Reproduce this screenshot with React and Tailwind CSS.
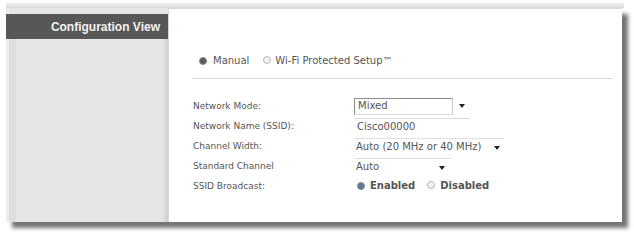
import React from 'react';

const Radio = ({ checked, tone = 'gray' }) => {
  const fill = tone === 'blue' ? 'bg-[#5f7a94]' : 'bg-[#5a5a5a]';
  return (
    <span
      className={`inline-block h-[8px] w-[8px] shrink-0 rounded-full border ${
        checked ? `${fill} border-[#8a8a8a]` : 'bg-[#f4f4f4] border-[#b5b5b5]'
      }`}
    />
  );
};

const Arrow = () => (
  <span className="inline-block h-0 w-0 border-x-[3px] border-t-[4px] border-x-transparent border-t-[#222]" />
);

const Row = ({ label, children }) => (
  <div className="flex h-[20px] items-center">
    <div className="w-[161px] shrink-0 text-[9px] text-[#555]">{label}</div>
    <div className="flex items-center text-[10px]">{children}</div>
  </div>
);

export default function App() {
  return (
    <div
      className="h-[232px] w-[634px] overflow-hidden bg-white pl-[6px] pt-[3px] text-[10px] leading-none"
      style={{ fontFamily: '"DejaVu Sans", Verdana, sans-serif' }}
    >
      <div className="h-[5px] w-[618px] bg-gradient-to-b from-[#f0f0f0] to-[#dcdcdc]" />
      <div className="flex h-[214px] w-[616px] shadow-[6px_6px_4px_rgba(0,0,0,0.55)]">
        {/* left panel */}
        <div className="flex w-[162px] shrink-0 flex-col bg-[#e6e6e6] border-l-[3px] border-[#ececec] pt-[6px]">
          <div
            className="flex h-[25px] -ml-[3px] items-center justify-end bg-[#575757] pr-[8px] text-[12px] font-bold text-[#f2f2f2]"
            style={{ fontFamily: '"Liberation Sans", Arial, sans-serif' }}
          >
            Configuration View
          </div>
          <div className="flex flex-1">
            <div className="w-[7px] bg-[#dedede]" />
            <div className="flex-1" />
            <div className="w-[5px] bg-gradient-to-r from-[#e2e2e2] to-[#cfcfcf]" />
          </div>
        </div>

        {/* content */}
        <div className="flex-1 border-t border-l border-[#d8d8d8] bg-white pl-[24px] pr-[9px] pt-[47px]">
          <div className="flex items-center pl-[6px] text-[#555]">
            <Radio checked />
            <span className="ml-[6px]">Manual</span>
            <span className="ml-[14px]"><Radio /></span>
            <span className="ml-[4px]">Wi-Fi Protected Setup™</span>
          </div>
          <div className="mt-[12px] h-px bg-[#d9d9d9]" />

          <div className="mt-[17px]">
            <Row label="Network Mode:">
              <div className="flex h-[17px] w-[116px] items-center">
                <span className="flex h-full flex-1 items-center border border-t-[#8c8c8c] border-l-[#8c8c8c] border-b-[#dcdcdc] border-r-[#c8c8c8] pl-[3px] text-[#555]">
                  Mixed
                </span>
                <span className="flex h-full w-[17px] items-center justify-center">
                  <Arrow />
                </span>
              </div>
            </Row>
            <Row label="Network Name (SSID):">
              <div className="flex h-[17px] w-[116px] items-center border-t border-[#d8d8d8] pl-[3px] text-[#555]">
                Cisco00000
              </div>
            </Row>
            <Row label="Channel Width:">
              <div className="flex h-[17px] w-[150px] items-center border-t border-[#e0e0e0] pl-[2px] text-[#555]">
                <span className="flex-1">Auto (20 MHz or 40 MHz)</span>
                <span className="pr-[4px]"><Arrow /></span>
              </div>
            </Row>
            <Row label="Standard Channel">
              <div className="flex h-[17px] w-[98px] items-center border-t border-[#e0e0e0] pl-[2px] text-[#555]">
                <span className="flex-1">Auto</span>
                <span className="pr-[7px]"><Arrow /></span>
              </div>
            </Row>
            <Row label="SSID Broadcast:">
              <div className="flex items-center pl-[3px] font-bold text-[#555]">
                <Radio checked tone="blue" />
                <span className="ml-[5px]">Enabled</span>
                <span className="ml-[12px]"><Radio /></span>
                <span className="ml-[5px]">Disabled</span>
              </div>
            </Row>
          </div>
        </div>
      </div>
    </div>
  );
}
